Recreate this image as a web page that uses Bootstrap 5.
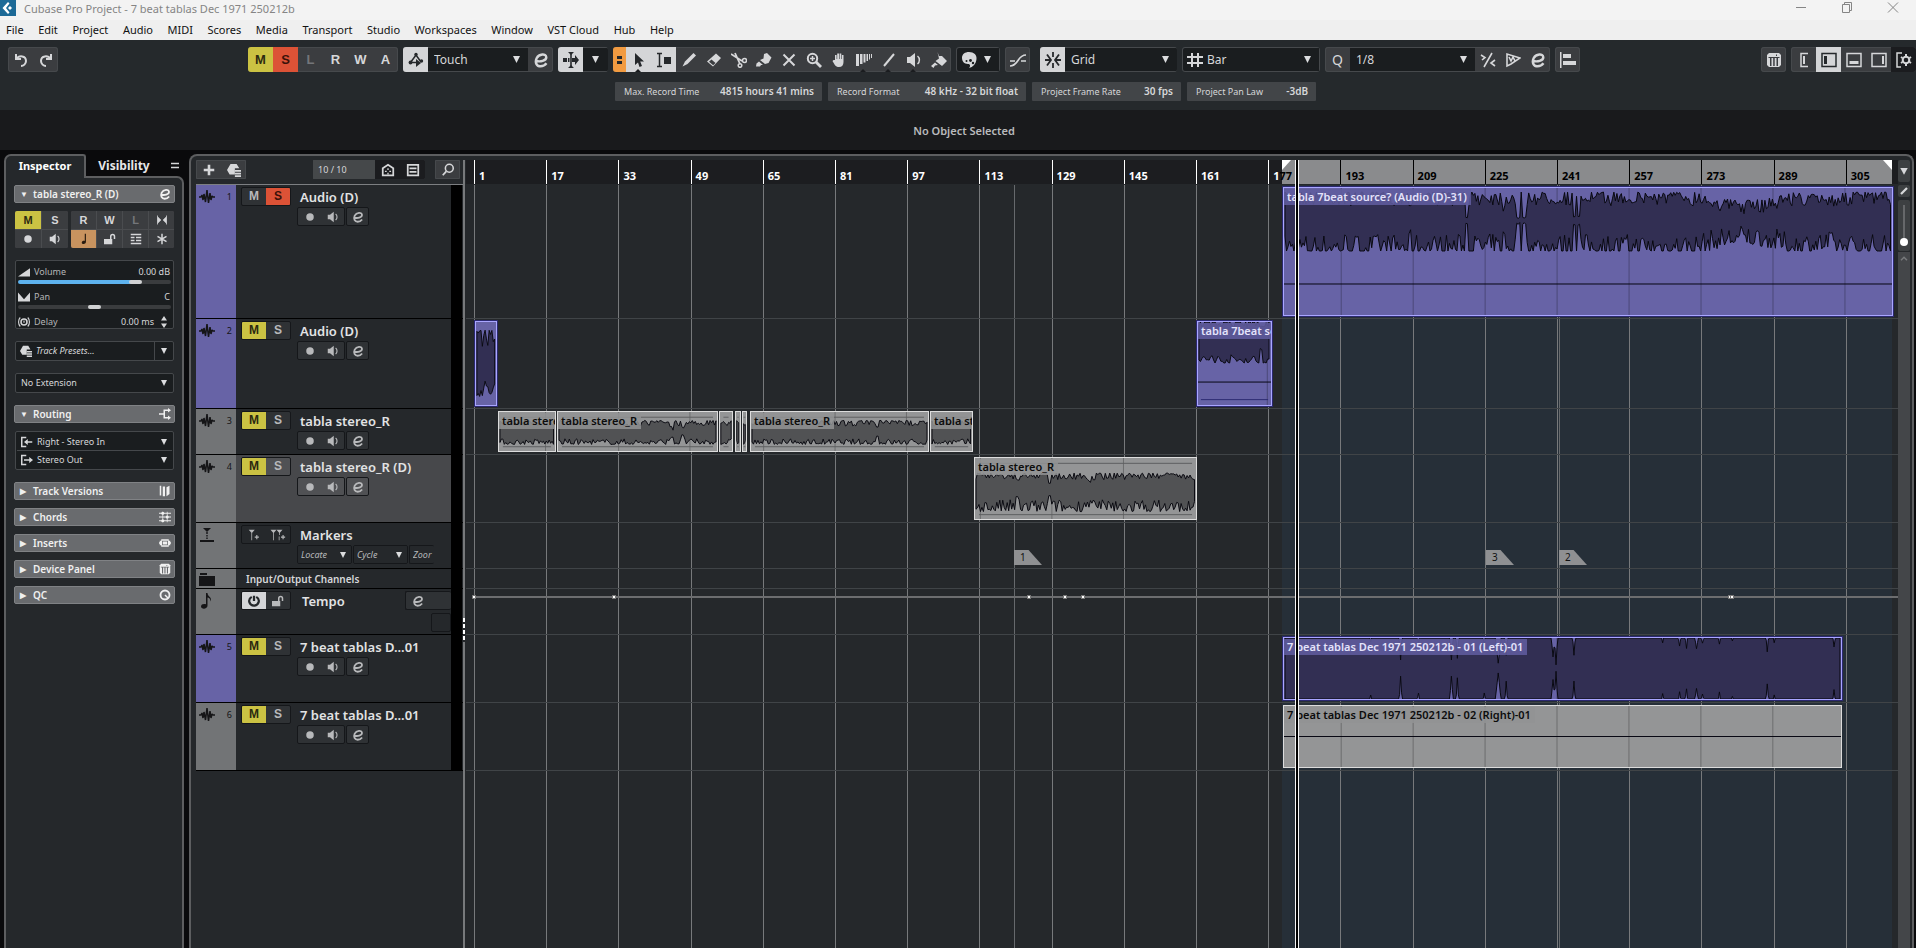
<!DOCTYPE html>
<html lang="en">
<head>
<meta charset="utf-8">
<meta name="viewport" content="width=device-width, initial-scale=1">
<title>Cubase Pro Project - 7 beat tablas Dec 1971 250212b</title>
<link href="https://cdn.jsdelivr.net/npm/bootstrap@5.3.0/dist/css/bootstrap.min.css" rel="stylesheet">
<script src="https://cdn.jsdelivr.net/npm/bootstrap@5.3.0/dist/js/bootstrap.bundle.min.js"></script>
<style>
:root{--panel:#25282b;--edge:#5d5e60;--cell:#3b3d40;--field:#1a1d1f;--rim:#46494c;--lit:#d4d5d7;--ink:#d6d7d9;
--purple:#6763a6;--grey:#727476;--down:url("data:image/svg+xml,%3Csvg xmlns='http://www.w3.org/2000/svg' viewBox='0 0 8 8'%3E%3Cpath d='M0 0h8L4 8z' fill='%23dcdddf'/%3E%3C/svg%3E")}
body{background:#0a0a0c;color:var(--ink);font-family:"Noto Sans","Open Sans",sans-serif;font-size:11px;line-height:16px}
.ic{width:16px;height:16px;fill:currentColor;stroke:none;flex:none;display:block}
.s{fill:none;stroke:currentColor;stroke-width:2}
.t{fill:none;stroke:currentColor;stroke-width:1}
.k{fill:var(--hole,#3b3d40)}
button{border:0;padding:0;background:none;color:inherit;font:inherit;display:flex;align-items:center;justify-content:center}
select{appearance:none;border:0;border-radius:0;background:var(--field) var(--down) no-repeat right 8px center/7px 7px;color:inherit;font:inherit;min-width:0}
.app-root{height:100vh}
.titlebar{height:20px;background:#f3f3f3;color:#858585}
.titlebar h1{font-size:11px;line-height:18px;font-weight:400;margin:0}
.win-btns button{width:46px;height:16px}
.menubar{height:20px;background:#efefef;padding-left:6px}
.menu-items{width:668px}
.menubar a{color:#111;text-decoration:none}
.toolbar{background:#25292c;height:70px;padding-top:7px}
.tool-row{height:25px;gap:5px}
.grp{display:flex;background:var(--cell);border-radius:3px;overflow:hidden;box-shadow:inset 0 0 0 1px var(--rim)}
.grp button{width:25px;height:25px}
.grp .letter{font:700 13px/25px "Liberation Sans",Arial,sans-serif}
.grp select{height:23px;margin:1px 0;font-size:12px;padding-left:6px}
.is-lit{background:var(--lit)!important;color:#25282b;--hole:#d4d5d7}
.is-mute{background:#cbc243!important;color:#2c2a10}
.is-solo{background:#dc5236!important;color:#3a120a}
.is-off{color:#74767a}
.has-more{position:relative}
.has-more:after{content:"";position:absolute;left:9px;bottom:0;border:solid transparent;border-width:0 3px 3px;border-bottom-color:#1a1c1f}
.w-touch{width:100px}.w-grid{width:112px}.w-bar{width:112px}.w-quant{width:125px}
.w-mini{width:25px;background-position:center!important}
.w-pal{width:18px;background-position:left 3px center!important}
.pal,.fld{background:var(--field);--hole:#1a1d1f}
.pal select,.fld select{margin-right:1px}
.nudge{margin-right:5px}
.qbtn{font-size:14px!important}
.right-tools{margin-left:176px;gap:5px}
.tool-mark{width:13px;background:#f29b41 linear-gradient(#25282b 0 3px,transparent 3px 5px,#25282b 5px 8px) no-repeat center/5px 8px}
.info{height:19px;margin-top:10px;padding-left:615px;gap:6px}
.info>div{background:#424548;padding:0 8px 0 9px;border-radius:1px;height:19px;font-size:9px;line-height:19px;display:flex;justify-content:space-between;gap:12px}
.info b{font-size:10px;font-weight:600}
.i1{width:207px}.i2{width:198px}.i3{width:149px}.i4{width:129px}
.obj-line{height:40px;background:#191a1c;font-weight:600;color:#b9babc;padding:2px 0 0 12px}
.inspector{width:180px;flex:none}
.tab-row{height:22px;font-size:12px;font-weight:700;line-height:20px}
.tab-row button{flex:none}
.tab-row .tab-on{width:82px;height:24px;border:2px solid var(--edge);border-bottom:0;border-radius:7px 3px 0 0;background:var(--panel);color:#fff;position:relative;z-index:1;font-size:11px;padding-bottom:2px}
.tab-row .tab-off{width:76px;height:24px;color:#e6e6e8}
.insp-body{border:2px solid var(--edge);border-bottom:0;border-radius:0 7px 0 0;background:var(--panel);padding:7px 7px 0 9px}
.sec{height:18px;background:#696b6e;border:1px solid #808285;border-radius:2px;color:#f0f0f0;font-size:10px;font-weight:600;width:161px;margin-left:-1px;--hole:#696b6e}
.sec button{height:16px;flex:1;justify-content:flex-start;gap:7px;padding-left:5px}
.tri{font-size:8px;width:6px}
.sec .ic{width:12px;height:12px;margin-right:3px}
.pad-grid{gap:1px;background:#4a4c4f;border-radius:2px;overflow:hidden;display:grid}
.pad-grid button{height:18px;background:var(--cell);font:700 11px/18px "Liberation Sans",Arial,sans-serif}
.pad-grid .ic{width:12px;height:12px}
.pads-a{grid-template-columns:1fr 1fr;width:53px}.pads-b{grid-template-columns:repeat(4,1fr);width:103px}
.timeb{background:#c8935f!important;color:#2a1c10}
.fieldbox{width:159px;border:1px solid #45484b;border-radius:2px;background:var(--field);font-size:9px;padding:1px}
.fieldbox .ic{width:12px;height:12px;margin-right:4px}
.fieldbox select{height:17px;flex:1;background-position:right 5px center;background-size:6px 6px}
.one-line select{height:16px}
.presets{background:linear-gradient(90deg,transparent 138px,#45484b 138px 139px,transparent 139px) var(--field)}
.presets select{background-color:transparent}
.meter-box{height:69px;padding:3px 2px 0 2px}
.meter-box .line{height:16px;padding-right:1px}
.line label,.line span{color:#b4b5b7}
input[type=range]{appearance:none;width:153px;height:4px;margin:0;display:block;border-radius:2px;background:#3a3c3e}
.line-rng{height:9px}
input[type=range]::-webkit-slider-thumb{appearance:none;width:13px;height:4px;border-radius:2px;background:#d0d1d3}
.vol-rng{background:linear-gradient(90deg,#5db2ee 75%,#3a3c3e 75%)!important}
.rt{border-bottom:1px solid #45484b}
.gap-row{margin-top:8px}.mt-12{margin-top:12px}
.project{border:2px solid var(--edge);border-bottom:0;border-radius:8px 8px 0 0;background:var(--panel);margin:0 2px 0 5px;min-width:0;overflow:hidden}
.tracklist{width:272px;flex:none;padding-left:5px}
.list-head{height:29px;padding-top:4px;border-bottom:1px solid #7d7f82}
.list-head .grp{height:19px;border-radius:1px}
.list-head .grp button{height:19px;width:25px}
.list-head .count{width:62px;padding-left:5px;font-size:9px;line-height:19px;background:#45484a}
.list-head .ic{width:14px;height:14px}
.head-mid{margin-left:67px}.head-end{margin-left:10px}
.dark-cell{background:#1b1c1f;--hole:#1b1c1f}
.trk,.lane{position:relative}
.t-xl{height:134px}.t-lg{height:90px}.t-md{height:68px}.t-sm{height:46px}.t-xs{height:20px}
.trk{display:flex;border-bottom:1px solid #000}
.strip{width:40px;background:var(--grey);color:#151517;padding:4px 4px 0 3px;font-size:9px}
.strip.pur{background:var(--purple)}
.body-cell{width:215px;overflow:hidden;padding:2px 0 0 5px;background:var(--panel)}
.sel .body-cell{background:#47484b}
.vu{width:11px;background:#000;margin-bottom:-1px;z-index:1}
.trk h2{font-size:13px;font-weight:600;line-height:20px;height:19px;margin:0 0 0 9px;color:#e2e3e4;white-space:nowrap}
.mini{display:flex;border:1px solid #15171a;border-radius:2px;background:#2f3235;overflow:hidden;color:#b8b9bb;--hole:#2f3235}
.sel .mini{background:#505154}
.mini button{width:24px;height:17px;font:700 12px/17px "Liberation Sans",Arial,sans-serif}
.mini .ic{width:12px;height:12px}
.mini .ic.wide{width:16px}
.row-2{margin:1px 0 0 56px;gap:1px}
.row-2 .mini button{width:23px}
.row-2 .mini:last-child button{width:21px}
.mini.plain,.mini.plain select{background-color:#25282b}
.mini select{width:53px;height:17px;font-size:9px;padding-left:3px;font-style:italic;background-position:right 5px center;background-size:6px 6px}
.mini.cut-off{width:25px;border-right:0}
.mini.cut-off select{background-image:none;flex:none}
.io-name{font-size:10px;font-weight:600;line-height:18px;padding-left:5px}
.folder .body-cell{padding-top:1px}.folder .strip{padding-top:2px}
.tempo h2{margin-left:11px}
.tempo-e{width:46px;border-right:0}
.tempo-box{width:20px;height:19px;margin:3px 0 0 auto}
.splitter{width:2px;background:#77797b;margin:4px 1px 0 0;flex:none;position:relative}
.splitter i{position:absolute;left:0;top:458px;width:2px;height:24px;background:repeating-linear-gradient(#fff 0 4px,#25282b 4px 6px)}
.timeline{position:relative;min-width:0;margin-top:4px;overflow:hidden}
.ruler{height:24px;margin-bottom:1px;background:#1c1d20;position:relative;font-weight:700;color:#fff;overflow:hidden}
.tick{position:absolute;top:0;height:24px;border-left:1px solid #fff;padding:8px 0 0 4px;line-height:16px}
.tick.in{border-color:#000;color:#000}
.range-bar,.range-bg{position:absolute;top:0;bottom:0;left:56.98%;right:.42%}
.range-bar{background:#8a8b8d}.range-bg{background:#262f38}
.range-bar:before,.range-bar:after{content:"";position:absolute;top:0;border:solid transparent}
.range-bar:before{left:0;border-width:10px 9px 0 0;border-top-color:#fff}
.range-bar:after{right:0;border-width:0 9px 10px 0;border-right-color:#fff}
.lanes{position:relative}
.vline{position:absolute;top:0;bottom:0;width:1px;background:#77797b}
.vline.dim{background:#66696c}
.lane{border-bottom:1px solid #404447}
.clip{position:absolute;top:2px;bottom:2px;border:1px solid #dcdcdc;background:#949596;color:#0c0c0c;overflow:hidden;font-size:11px;font-weight:600;line-height:16px}
.clip.pur{background:var(--purple);border-color:#a9a6ff;color:#e4e3fb;box-shadow:0 0 0 1px #2b2870}
.clip svg{position:absolute;inset:0;width:100%;height:100%}
.clip span{position:relative;display:inline-block;margin-top:1px;padding:0 4px 0 3px;white-space:nowrap;background:rgba(146,147,148,.85)}
.clip.pur span{background:rgba(96,92,158,.88)}
.flag{position:absolute;top:27px;width:28px;height:15px;background:#8f9092;color:#111;clip-path:polygon(0 0,52% 0,100% 100%,0 100%);font-size:10px;line-height:15px;padding-left:6px}
.tempo-line{position:absolute;left:8px;right:0;top:7px;height:2px;background:#6c6d6f}
.node{position:absolute;top:6px;width:4px;height:4px;background:#fff;border:1px solid #777;margin-left:-2px}
.playhead{position:absolute;top:0;bottom:0;left:57.89%;width:4px;background:#000;border:solid #f4f4f4;border-width:0 1px}
.side{width:14px;flex:none;padding:4px 2px 0 0}
.side button,.zoom{width:12px;background:#3d4042;border-radius:2px}
.side .ic{width:12px;height:12px}
.s-top{height:22px;margin-bottom:3px}.s-pen{height:12px;margin-bottom:3px}
.zoom{height:51px;position:relative;margin-bottom:1px}
.zoom:before{content:"";position:absolute;left:5px;top:5px;width:2px;height:36px;background:#66686a}
.zoom:after{content:"";position:absolute;left:2px;top:38px;width:8px;height:8px;border-radius:50%;background:#fff}
.scroll{background:#444649;width:12px;color:#77797b}
</style>
</head>
<body>
<svg width="0" height="0" class="position-absolute" aria-hidden="true"><defs>
<symbol id="undo" viewBox="0 0 16 16"><path class="s" d="M3 2v5h5M3.500 7C6 3 13 3.500 13 9c0 3-2.500 5-5 5"/></symbol>
<symbol id="redo" viewBox="0 0 16 16"><path class="s" d="M13 2v5H8M12.500 7C10 3 3 3.500 3 9c0 3 2.500 5 5 5"/></symbol>
<symbol id="e" viewBox="0 0 16 16"><path class="s" style="stroke-width:2.400" d="M2.500 8.500C7 10.500 13.500 8.500 13.300 5.200 13 1.200 6 1.800 3.600 6.200 1.500 11 4 14.300 7.500 14.300c2.500 0 4.700-1.300 6-3"/></symbol>
<symbol id="auto" viewBox="0 0 16 16"><path class="s" style="stroke-width:1.500" d="M2.500 10.500 8 3l5 7M3 10.500h6"/><circle cx="8" cy="2.500" r="1.700"/><circle cx="2.500" cy="10.500" r="1.900"/><path d="M8 7v8l5-4z"/><circle cx="13.500" cy="9" r="1.700"/></symbol>
<symbol id="ascroll" viewBox="0 0 16 16"><path d="M0 6h4v4H0zM7.200 1h1.600v14H7.200zM9 6h3V3l4 5-4 5v-3H9zM5 6h1.500v4H5z"/><path d="M5 0h6L8 3zM5 16h6l-3-3z"/></symbol>
<symbol id="arrow" viewBox="0 0 16 16"><path d="M4 1v12l3-2.500L8.500 15l2.500-1-1.800-4.500H13z"/></symbol>
<symbol id="range" viewBox="0 0 16 16"><path class="s" style="stroke-width:1.500" d="M1 1.500h5M1 14.500h5M3.500 1.500v13"/><path d="M8 5h7v7H8z"/></symbol>
<symbol id="pencil" viewBox="0 0 16 16"><path d="M12.500 1 15 3.500 6.500 12 1.500 14.500 4 9.500z"/></symbol>
<symbol id="eraser" viewBox="0 0 16 16"><path d="M10 1.500 15 6l-8 8.500L1 9.500z"/><path class="k" d="m5.500 7.500 4 3.500-2.300 2.200L3 9.800z"/></symbol>
<symbol id="cut" viewBox="0 0 16 16"><path class="s" style="stroke-width:1.800" d="M0 2l11 7M4 1l5 11"/><circle class="s" style="stroke-width:1.500" cx="13.500" cy="8.500" r="2"/><circle class="s" style="stroke-width:1.500" cx="9" cy="13.500" r="1.800"/></symbol>
<symbol id="glue" viewBox="0 0 16 16"><path d="M11 1l4.500 4.500-3 5.500-3.500 1-5-4 3.500-1.500L8 2zM3 9.500l4 3.500H5l-1 1.500H0l.5-3z"/></symbol>
<symbol id="cross" viewBox="0 0 16 16"><path class="s" d="M2.500 2.500l11 11M13.500 2.500l-11 11"/></symbol>
<symbol id="zoomi" viewBox="0 0 16 16"><circle class="s" cx="6.500" cy="6.500" r="4.700"/><path class="s" style="stroke-width:2.800" d="m10 10 5 5"/><path class="t" style="stroke-width:1.500" d="M4 6.500h5M6.500 4v5"/></symbol>
<symbol id="hand" viewBox="0 0 16 16"><path d="M4 8V3h1.600v4h.6V1.500H8V7h.6V1.500h1.700V7h.6V3h1.600v7c0 3-1.500 5-4.500 5s-4-1.500-6.500-6l1-1z"/></symbol>
<symbol id="comp" viewBox="0 0 16 16"><path d="M0 2h3v12H0zM4 2h2.500v10H4zM7.500 2h2v8.500h-2zM10.500 2H12v7h-1.500zM13 2h1v5.500h-1zM15 2h1v4h-1z"/></symbol>
<symbol id="linei" viewBox="0 0 16 16"><path class="s" d="M3 14 13 2"/></symbol>
<symbol id="spk" viewBox="0 0 16 16"><path d="M1 5h3l5-4v14l-5-4H1z"/><path class="s" style="stroke-width:1.500" d="M11.500 4c2.500 2 2.500 6 0 8"/></symbol>
<symbol id="bucket" viewBox="0 0 16 16"><path d="M6.500 0l1.500 4h3l5 5-5 5-6.500-5L8 6.500zM4 10.500 7 13l-3 .5L2.500 16 0 14z"/></symbol>
<symbol id="palette" viewBox="0 0 16 16"><path d="M8 0c5 0 8 3 7.500 7-.5 5-3.500 8-7.500 9 2-2 1-4-1-4-4 0-6-3-6-6 0-4 3-6 7-6z"/><circle class="k" cx="9.500" cy="8.500" r="1.400"/><circle class="k" cx="5.500" cy="9" r="1"/><circle class="k" cx="12" cy="11" r="1.200"/></symbol>
<symbol id="curve" viewBox="0 0 16 16"><path class="s" style="stroke-width:1.700" d="M0 14c9 0 7-11 16-11"/><path class="s" style="stroke-width:1.500" d="M0 9h5M11 9h5"/></symbol>
<symbol id="snap" viewBox="0 0 16 16"><path class="s" style="stroke-width:1.800" d="M8 0v5M8 11v5M2 2.500 6 8l-4 5.500M14 2.500 10 8l4 5.500M0 8h5M11 8h5"/></symbol>
<symbol id="gridi" viewBox="0 0 16 16"><path class="s" d="M5 1v14M11 1v14M0 5h16M0 11h16"/></symbol>
<symbol id="iq" viewBox="0 0 16 16"><path class="s" style="stroke-width:1.600" d="M12 1 4 15M1 3l4 2.500L2 8M15 8l-4 3 4 3"/></symbol>
<symbol id="aq" viewBox="0 0 16 16"><path class="s" style="stroke-width:1.600" d="M2 14V2l13 4-9 6zM4 5l2 4 2-4 2 4"/></symbol>
<symbol id="align" viewBox="0 0 16 16"><path d="M0 0h1.500v16H0zM3 2h8v4H3zM3 9h13v4H3z"/></symbol>
<symbol id="keys" viewBox="0 0 16 16"><path d="M3 1h10l2 2v10l-2 2H3l-2-2V3z"/><path class="k" d="M2.500 5h11v1h-11zM4 6h1.500v8H4zM7.200 6h1.500v8H7.200zM10.500 6H12v8h-1.500zM10 2.500h1V4h-1z"/></symbol>
<symbol id="z1" viewBox="0 0 16 16"><path class="t" style="stroke-width:1.500" d="M12 1.500H5v13h7"/><path d="M7 4h2v8H7z"/></symbol>
<symbol id="z2" viewBox="0 0 16 16"><path class="t" style="stroke-width:1.500" d="M1 1.500h14v13H1z"/><path d="M3 4h3v8H3z"/></symbol>
<symbol id="z3" viewBox="0 0 16 16"><path class="t" style="stroke-width:1.500" d="M1 1.500h14v13H1z"/><path d="M3.500 9h9v3h-9z"/></symbol>
<symbol id="z4" viewBox="0 0 16 16"><path class="t" style="stroke-width:1.500" d="M1 1.500h14v13H1z"/><path d="M11 4h2v8h-2z"/></symbol>
<symbol id="gear" viewBox="0 0 16 16"><path class="t" style="stroke-width:1.500" d="M6 1H1v14h4"/><circle class="s" cx="10" cy="8" r="3.300"/><path class="s" d="M10 2v2M10 12v2M5 5l1.500 1M15 5l-1.500 1M5 11l1.500-1M15 11l-1.500-1"/></symbol>
<symbol id="bow" viewBox="0 0 16 16"><path d="M2 3l5 5-5 5zM14 3 9 8l5 5z"/><path class="t" d="M2 2v12M14 2v12"/></symbol>
<symbol id="dot" viewBox="0 0 16 16"><circle cx="8" cy="8" r="5"/></symbol>
<symbol id="note" viewBox="0 0 16 16"><path d="M9 1h1.600v11c0 3-5.600 3.500-5.600.5C5 10.500 7.500 10 9 10.500z"/></symbol>
<symbol id="eighth" viewBox="0 0 16 16"><path d="M7 0h1.500c0 4 5 3.500 3 8.500 0-3-1.500-4-3-4v8c0 4-6.500 4-6.500 1C2 11 5 10.500 7 11.300z"/></symbol>
<symbol id="lock" viewBox="0 0 16 16"><path d="M0 8h11v7H0z"/><path class="s" d="M9 8V4.500c0-3.500 5-3.500 5 0V8"/></symbol>
<symbol id="lanesi" viewBox="0 0 16 16"><path class="s" style="stroke-width:1.700" d="M1 2h14M1 14h14M1 6h5M8 6h7M1 10h5M8 10h7"/></symbol>
<symbol id="star" viewBox="0 0 16 16"><path class="s" d="M8 1v14M2 4.500l12 7M14 4.500l-12 7"/></symbol>
<symbol id="ramp" viewBox="0 0 16 16"><path d="M0 14 16 3v11z"/></symbol>
<symbol id="pani" viewBox="0 0 16 16"><path d="M0 2l8 9 8-9v12H0z"/></symbol>
<symbol id="delay" viewBox="0 0 16 16"><circle class="s" cx="8" cy="8" r="4"/><path class="s" style="stroke-width:1.500" d="M3 2c-3 3-3 9 0 12M13 2c3 3 3 9 0 12M8 6v3"/></symbol>
<symbol id="preset" viewBox="0 0 16 16"><path d="M4 1h7l3 5H9v7H3L0 8z"/><path d="M9 8h7v2H9zM9 11h7v2H9zM9 14h7v2H9z"/></symbol>
<symbol id="inp" viewBox="0 0 16 16"><path class="s" d="M7 2H1v12h6"/><path d="M4 8l5-4v3h6v2H9v3z"/></symbol>
<symbol id="outp" viewBox="0 0 16 16"><path class="s" d="M7 2H1v12h6"/><path d="M16 8l-5-4v3H4v2h7v3z"/></symbol>
<symbol id="route" viewBox="0 0 16 16"><path class="s" d="M0 8h6M13 3H7v10h6"/><path d="M12 0l4 3-4 3zM12 10l4 3-4 3z"/></symbol>
<symbol id="vers" viewBox="0 0 16 16"><path d="M1 1h2v13H1zM5 2h3v13H5zM10 3l4-2v11l-4 3z"/></symbol>
<symbol id="chord" viewBox="0 0 16 16"><path class="s" style="stroke-width:1.500" d="M0 3h16M0 8h16M0 13h16"/><path class="t" d="M5 1v14M11 1v14"/><circle cx="5" cy="3" r="2"/><circle cx="11" cy="8" r="2"/><circle cx="5" cy="13" r="2"/></symbol>
<symbol id="ins" viewBox="0 0 16 16"><path d="M3 3h10v2h2v2h1v2h-1v2h-2v2H3v-2H1V9H0V7h1V5h2z"/><path class="k" d="M4 5h8v1H4zM4 10h8v1H4zM4 5h1v6H4zM11 5h1v6h-1z"/></symbol>
<symbol id="qci" viewBox="0 0 16 16"><circle class="s" style="stroke-width:2.500" cx="8" cy="8" r="6"/><path class="s" d="m8 8 4 4"/></symbol>
<symbol id="plus" viewBox="0 0 16 16"><path class="s" style="stroke-width:3" d="M8 2v12M2 8h12"/></symbol>
<symbol id="visi" viewBox="0 0 16 16"><path class="s" d="M2 6l6-4 6 4v8H2z"/><path class="s" style="stroke-width:1.500" d="M4.500 9.500h2M9.500 9.500h2M8 6v2M8 11v2"/></symbol>
<symbol id="listi" viewBox="0 0 16 16"><path class="s" style="stroke-width:2" d="M2 2h12v12H2zM4 6h8M4 10h8"/></symbol>
<symbol id="find" viewBox="0 0 16 16"><circle class="s" style="stroke-width:1.800" cx="9.500" cy="6" r="4.500"/><path class="s" d="M6 9.500 2 14"/></symbol>
<symbol id="wav" viewBox="0 0 16 16"><path class="s" style="stroke-width:1.500" stroke-linejoin="bevel" d="M0 8h2l1-2 1 5 1-6 1.500 8L8 1l1.500 13L11 4l1 7 1-4 1 1h2"/></symbol>
<symbol id="marks" viewBox="0 0 16 16"><path d="M4 1h8L8 5zM1 13h14v2H1zM7.300 5h1.400v2H7.300zM7.300 8h1.400v1.500H7.300zM7.300 10.500h1.400V12H7.300z"/></symbol>
<symbol id="folder" viewBox="0 0 16 16"><path d="M1 2h7v2H1zM0 5h16v10H0z"/></symbol>
<symbol id="addm" viewBox="0 0 16 16"><path d="M1 1h8L5.500 5v10h-1V5zM9 10h2V8h1.500v2h2v1.500h-2v2H11v-2H9z"/></symbol>
<symbol id="addc" viewBox="0 0 20 16"><path d="M0 1h8L4.500 5v10h-1V5zM8 1h8l-3.500 4v3h-1V5zM11 10h1v5h-1zM14 10h2V8h1.500v2h2v1.500h-2v2H16v-2h-2z"/></symbol>
<symbol id="power" viewBox="0 0 16 16"><path class="s" style="stroke-width:3" d="M5 2.500C-1 6 1.500 14 8 14s9-8 3-11.500M8 1v7"/></symbol>
<symbol id="cube" viewBox="0 0 16 16"><path d="M0 0h16v16H0z" fill="#1d6a97"/><path d="M8 2 2.500 8 8 14l1.500-1.500L6 8l3.500-4.500zM10 6l2 2-2 2-2-2z" fill="#fff"/></symbol>
</defs></svg>

<div class="app-root d-flex flex-column overflow-hidden">
<header class="titlebar d-flex align-items-start">
  <svg class="ic me-2"><use href="#cube"/></svg><h1 class="flex-grow-1">Cubase Pro Project - 7 beat tablas Dec 1971 250212b</h1>
  <div class="win-btns d-flex">
    <button aria-label="Minimize"><svg class="ic" viewBox="0 0 16 16"><path class="t" d="M3 7.500h10"/></svg></button>
    <button aria-label="Restore"><svg class="ic" viewBox="0 0 16 16"><path class="t" d="M3.500 4.500h7v8h-7zM5.500 4V2.500h7v8H11"/></svg></button>
    <button aria-label="Close"><svg class="ic" viewBox="0 0 16 16"><path class="t" d="m3 2.500 10 10M13 2.500l-10 10"/></svg></button>
  </div>
</header>
<nav class="menubar d-flex align-items-center" aria-label="Main menu"><div class="menu-items d-flex justify-content-between">
<a href="#">File</a><a href="#">Edit</a><a href="#">Project</a><a href="#">Audio</a><a href="#">MIDI</a><a href="#">Scores</a><a href="#">Media</a><a href="#">Transport</a><a href="#">Studio</a><a href="#">Workspaces</a><a href="#">Window</a><a href="#">VST Cloud</a><a href="#">Hub</a><a href="#">Help</a>
</div></nav>

<div class="toolbar">
  <div class="tool-row d-flex">
    <div class="d-flex flex-grow-1 ps-2"><div class="grp"><button aria-label="Undo"><svg class="ic"><use href="#undo"/></svg></button><button aria-label="Redo"><svg class="ic"><use href="#redo"/></svg></button></div></div>
    <div class="grp"><button class="letter is-mute">M</button><button class="letter is-solo">S</button><button class="letter is-off">L</button><button class="letter">R</button><button class="letter">W</button><button class="letter">A</button></div>
    <div class="grp"><button class="is-lit" aria-label="Automation follows events"><svg class="ic"><use href="#auto"/></svg></button><select class="w-touch" aria-label="Automation mode"><option>Touch</option></select><button aria-label="Automation panel"><svg class="ic"><use href="#e"/></svg></button></div>
    <div class="grp"><button class="is-lit" aria-label="Auto-scroll"><svg class="ic"><use href="#ascroll"/></svg></button><select aria-label="Auto-scroll settings" class="w-mini"><option></option></select></div>
    <div class="grp" id="tools"></div>
    <div class="grp pal"><button aria-label="Color tool"><svg class="ic"><use href="#palette"/></svg></button><select class="w-pal" aria-label="Colors"><option></option></select></div>
    <div class="grp nudge"><button aria-label="Nudge"><svg class="ic"><use href="#curve"/></svg></button></div>
    <div class="grp"><button class="is-lit" aria-label="Snap"><svg class="ic"><use href="#snap"/></svg></button><select class="w-grid" aria-label="Snap type"><option>Grid</option></select></div>
    <div class="grp fld"><button aria-label="Grid type"><svg class="ic"><use href="#gridi"/></svg></button><select class="w-bar ps-0" aria-label="Grid type value"><option>Bar</option></select></div>
    <div class="grp"><button class="qbtn" aria-label="Apply quantize">Q</button><select class="w-quant" aria-label="Quantize preset"><option>1/8</option></select><button aria-label="Iterative quantize"><svg class="ic"><use href="#iq"/></svg></button><button aria-label="Audio quantize"><svg class="ic"><use href="#aq"/></svg></button><button aria-label="Quantize panel"><svg class="ic"><use href="#e"/></svg></button></div>
    <div class="grp"><button aria-label="Align"><svg class="ic"><use href="#align"/></svg></button></div>
    <div class="d-flex right-tools">
      <div class="grp"><button aria-label="On-screen keyboard"><svg class="ic"><use href="#keys"/></svg></button></div>
      <div class="grp"><button aria-label="Inspector zone"><svg class="ic"><use href="#z1"/></svg></button><button class="is-lit" aria-label="Left zone"><svg class="ic"><use href="#z2"/></svg></button><button aria-label="Lower zone"><svg class="ic"><use href="#z3"/></svg></button><button aria-label="Right zone"><svg class="ic"><use href="#z4"/></svg></button><button class="dark-cell" aria-label="Layout setup"><svg class="ic"><use href="#gear"/></svg></button></div>
    </div>
  </div>
  <div class="info d-flex">
    <div class="i1">Max. Record Time <b>4815 hours 41 mins</b></div><div class="i2">Record Format <b>48 kHz - 32 bit float</b></div><div class="i3">Project Frame Rate <b>30 fps</b></div><div class="i4">Project Pan Law <b>-3dB</b></div>
  </div>
</div>
<div class="obj-line d-flex align-items-center justify-content-center">No Object Selected</div>

<main class="d-flex flex-grow-1 pt-1 ps-1 overflow-hidden">
<aside class="inspector d-flex flex-column">
  <div class="tab-row d-flex"><button class="tab-on">Inspector</button><button class="tab-off">Visibility</button><button class="ms-auto" aria-label="Setup inspector"><svg class="ic" viewBox="0 0 16 16"><path class="s" style="stroke-width:1.500" d="M3 6.500h8M3 10.500h8"/></svg></button></div>
  <div class="insp-body flex-grow-1">
    <div class="sec d-flex align-items-center"><button><i class="tri fst-normal">▼</i>tabla stereo_R (D)</button><svg class="ic"><use href="#e"/></svg></div>
    <div class="d-flex gap-row" style="gap:3px">
      <div class="pad-grid pads-a"><button class="is-mute">M</button><button>S</button><button aria-label="Record enable"><svg class="ic"><use href="#dot"/></svg></button><button aria-label="Monitor"><svg class="ic"><use href="#spk"/></svg></button></div>
      <div class="pad-grid pads-b"><button>R</button><button>W</button><button class="is-off">L</button><button aria-label="Channel"><svg class="ic"><use href="#bow"/></svg></button><button class="timeb" aria-label="Musical time base"><svg class="ic"><use href="#note"/></svg></button><button aria-label="Lock"><svg class="ic"><use href="#lock"/></svg></button><button aria-label="Lanes"><svg class="ic"><use href="#lanesi"/></svg></button><button aria-label="Freeze"><svg class="ic"><use href="#star"/></svg></button></div>
    </div>
    <div class="fieldbox meter-box mt-12">
      <div class="line d-flex align-items-center"><svg class="ic"><use href="#ramp"/></svg><label for="vol" class="flex-grow-1">Volume</label>0.00 dB</div>
      <div class="line-rng"><input id="vol" class="vol-rng" type="range" min="0" max="100" value="79"></div>
      <div class="line d-flex align-items-center"><svg class="ic"><use href="#pani"/></svg><label for="pan" class="flex-grow-1">Pan</label>C</div>
      <div class="line-rng"><input id="pan" type="range" min="0" max="100" value="50"></div>
      <div class="line d-flex align-items-center"><svg class="ic"><use href="#delay"/></svg><span class="flex-grow-1">Delay</span>0.00 ms<svg class="ic ms-1 me-0" viewBox="0 0 16 16"><path d="M8 0l4 6H4zM8 16l4-6H4z"/></svg></div>
    </div>
    <div class="fieldbox one-line mt-12 d-flex align-items-center ps-1 presets"><svg class="ic"><use href="#preset"/></svg><select class="fst-italic" aria-label="Track presets"><option>Track Presets...</option></select></div>
    <div class="fieldbox one-line mt-12 d-flex"><select class="ps-1" aria-label="Extension"><option>No Extension</option></select></div>
    <div class="sec mt-12 d-flex align-items-center"><button><i class="tri fst-normal">▼</i>Routing</button><svg class="ic"><use href="#route"/></svg></div>
    <div class="fieldbox gap-row">
      <div class="d-flex align-items-center ps-1 rt"><svg class="ic"><use href="#inp"/></svg><select aria-label="Input routing"><option>Right - Stereo In</option></select></div>
      <div class="d-flex align-items-center ps-1"><svg class="ic"><use href="#outp"/></svg><select aria-label="Output routing"><option>Stereo Out</option></select></div>
    </div>
    <div class="sec mt-12 d-flex align-items-center"><button><i class="tri fst-normal">▶</i>Track Versions</button><svg class="ic"><use href="#vers"/></svg></div>
    <div class="sec gap-row d-flex align-items-center"><button><i class="tri fst-normal">▶</i>Chords</button><svg class="ic"><use href="#chord"/></svg></div>
    <div class="sec gap-row d-flex align-items-center"><button><i class="tri fst-normal">▶</i>Inserts</button><svg class="ic"><use href="#ins"/></svg></div>
    <div class="sec gap-row d-flex align-items-center"><button><i class="tri fst-normal">▶</i>Device Panel</button><svg class="ic"><use href="#keys"/></svg></div>
    <div class="sec gap-row d-flex align-items-center"><button><i class="tri fst-normal">▶</i>QC</button><svg class="ic"><use href="#qci"/></svg></div>
  </div>
</aside>

<section class="project d-flex flex-grow-1" aria-label="Project">
  <div class="tracklist" id="tracklist">
    <div class="list-head d-flex">
      <div class="grp"><button aria-label="Add track"><svg class="ic"><use href="#plus"/></svg></button><button aria-label="Track preset"><svg class="ic"><use href="#preset"/></svg></button></div>
      <div class="grp head-mid"><div class="count">10 / 10</div><button class="dark-cell" aria-label="Visibility agents"><svg class="ic"><use href="#visi"/></svg></button><button class="dark-cell" aria-label="Global controls"><svg class="ic"><use href="#listi"/></svg></button></div>
      <div class="grp head-end"><button aria-label="Find track"><svg class="ic"><use href="#find"/></svg></button></div>
    </div>
  </div>
  <div class="splitter"><i></i></div>
  <div class="timeline flex-grow-1 d-flex flex-column">
    <div class="ruler" id="ruler"><div class="range-bar"></div></div>
    <div class="lanes flex-grow-1" id="lanes"><div class="range-bg"></div></div>
    <div class="playhead"></div>
  </div>
  <div class="side d-flex flex-column">
    <button class="s-top" aria-label="Ruler menu"><svg class="ic" viewBox="0 0 16 16"><path d="M3 4h10L8 13z"/></svg></button>
    <button class="s-pen" aria-label="Edit"><svg class="ic" viewBox="0 0 16 16"><path class="s" style="stroke-width:3" d="m4 12 8-8"/></svg></button>
    <div class="zoom"></div>
    <div class="scroll flex-grow-1"><svg class="ic" viewBox="0 0 16 16"><path class="s" d="m4 11 4-4 4 4"/></svg></div>
  </div>
</section>
</main>
</div>

<script>
const ic = (n, c = '') => `<svg class="ic ${c}"><use href="#${n}"/></svg>`;
const more = ['arrow', 'comp', 'linei', 'spk'];
document.getElementById('tools').innerHTML =
  '<div class="tool-mark"></div>' +
  ['arrow','range','pencil','eraser','cut','glue','cross','zoomi','hand','comp','linei','spk','bucket']
  .map((n,i)=>`<button class="${i<2?'is-lit':''} ${more.includes(n)?'has-more':''}" aria-label="${n}">${ic(n)}</button>`).join('');

const tracks = [
 {n:1,t:'xl',c:'pur',name:'Audio (D)',solo:1},{n:2,t:'lg',c:'pur',name:'Audio (D)',mute:1},
 {n:3,t:'sm',name:'tabla stereo_R',mute:1},{n:4,t:'md',name:'tabla stereo_R (D)',mute:1,sel:1},
 {kind:'marker',t:'sm',icon:'marks'},{kind:'folder',t:'xs',icon:'folder'},{kind:'tempo',t:'sm',icon:'eighth'},
 {n:5,t:'md',c:'pur',name:'7 beat tablas D...01',mute:1},{n:6,t:'md',name:'7 beat tablas D...01',mute:1}];
const bodies = {
 marker:()=>`<div class="d-flex"><div class="mini plain"><button aria-label="Add marker">${ic('addm')}</button><button aria-label="Add cycle marker">${ic('addc','wide')}</button></div><h2>Markers</h2></div>
  <div class="row-2 d-flex"><div class="mini plain"><select aria-label="Locate"><option>Locate</option></select></div><div class="mini plain"><select aria-label="Cycle"><option>Cycle</option></select></div><div class="mini plain cut-off"><select aria-label="Zoom"><option>Zoor</option></select></div></div>`,
 folder:()=>`<div class="io-name">Input/Output Channels</div>`,
 tempo:()=>`<div class="d-flex"><div class="mini"><button class="is-lit" aria-label="Activate tempo track">${ic('power')}</button><button aria-label="Lock">${ic('lock')}</button></div><h2>Tempo</h2><div class="mini ms-auto tempo-e"><button aria-label="Edit tempo">${ic('e')}</button></div></div><div class="mini plain tempo-box"></div>`,
 audio:t=>`<div class="d-flex"><div class="mini"><button class="${t.mute?'is-mute':''}">M</button><button class="${t.solo?'is-solo':''}">S</button></div><h2>${t.name}</h2></div>
  <div class="row-2 d-flex"><div class="mini"><button aria-label="Record enable">${ic('dot')}</button><button aria-label="Monitor">${ic('spk')}</button></div><div class="mini"><button aria-label="Edit channel">${ic('e')}</button></div></div>`};
document.getElementById('tracklist').insertAdjacentHTML('beforeend', tracks.map(t=>
 `<div class="trk t-${t.t} ${t.sel?'sel':''} ${t.kind||''}"><div class="strip d-flex justify-content-between align-items-start ${t.c||''}">${ic(t.icon||'wav')}<span>${t.n||''}</span></div><div class="body-cell">${bodies[t.kind||'audio'](t)}</div><div class="vu"></div></div>`).join(''));

/* Timeline: x values are measured on a 1432-unit wide view and placed as percentages. */
const W = 1432, pc = x => (x / W * 100).toFixed(3) + '%';
const X0 = 8, BAR = 72.2, RANGE = 816;
const ruler = document.getElementById('ruler'), lanes = document.getElementById('lanes');
let rh = '', lh = '';
for (let i = 0; i < 20; i++) {
  const x = X0 + i * BAR, n = 1 + 16 * i;
  rh += `<div class="tick ${x > RANGE ? 'in' : ''}" style="left:${pc(x)}">${n === 177 ? '1<span class="text-black">77</span>' : n}</div>`;
  lh += `<div class="vline" style="left:${pc(x)}"></div>`;
}
[548, 1093].forEach(x => lh += `<div class="vline dim" style="left:${pc(x)}"></div>`);
ruler.insertAdjacentHTML('beforeend', rh);

let seed = 7;
const rnd = () => (seed = (seed * 16807) % 2147483647) / 2147483647;
function wave(c, h) {
  const w = c.w, v = c.v, top = [], bot = [];
  for (let x = 1; x <= w - 1; x += v.step || 1.5) {
    let k = 1;
    (v.dips || []).forEach(([dx, dw, d]) => { const q = Math.abs(x - dx); if (q < dw) k = Math.min(k, 1 - d * (v.soft ? 1 - q / dw : 1)); });
    (v.slope || []).forEach(([a, b, f]) => { if (x > a && x < b) k *= 1 - f * Math.sin((x - a) / (b - a) * Math.PI); });
    const mid = v.mid;
    const j = () => (Math.pow(rnd(), 1.6) - .35) * v.j * (k < .5 ? .1 : 1);
    top.push(`${x} ${Math.max(v.min ?? 2, mid - (mid - v.top) * k + j()).toFixed(1)}`);
    bot.push(`${x} ${Math.min(v.max ?? h - 2, mid + (v.bot - mid) * k - j() * (v.jb || 1)).toFixed(1)}`);
  }
  const fill = c.p ? '#322f53' : '#515254';
  return `<path d="M${top.join('L')}L${bot.reverse().join('L')}Z" fill="${fill}" stroke="#08080f" stroke-width="1"/>`;
}
function clip(c, h) {
  let g = '';
  for (let i = 0; i < 20; i++) { const x = X0 + i * BAR - c.x; if (x > 2 && x < c.w - 2) g += `<path d="M${x.toFixed(1)} 0V${h}" stroke="#000" stroke-opacity=".28"/>`; }
  if (c.rule) g += `<path d="M4 5.500H${c.w - 4}M4 ${h - 4.5}H${c.w - 4}" stroke="#5c5d5f" stroke-width="1" fill="none"/>`;
  if (c.v) g += wave(c, h);
  if (c.line) g += `<path d="M0 ${c.line}.5H${c.w}" stroke="#050510"/>`;
  if (c.low) g += `<path d="M3 ${c.low}.5H${c.w - 3}" stroke="#2b2870"/>`;
  return `<div class="clip ${c.p ? 'pur' : ''}" style="left:${pc(c.x)};width:${pc(c.w)}"><svg viewBox="0 0 ${c.w} ${h}" preserveAspectRatio="none" aria-hidden="true">${g}</svg>${c.t ? `<span>${c.t}</span>` : ''}</div>`;
}
const small = {mid:20, top:11, bot:32, j:6, min:5, max:36};
const R = 'tabla stereo_R';
const content = [
 [{x:817,w:610,p:1,t:'tabla 7beat source? (Audio (D)-31)',line:97,v:{mid:33,top:9,bot:60,j:14,jb:1.5,min:2,max:64,
   dips:[[62,2,.1],[127,1.2,.3],[183,2,.88],[221,1.2,.3],[235,3,.88],[241,1.6,.88],[291,1.2,.85],[296,1.2,.85]],slope:[[415,510,.35],[510,570,.1]]}}],
 [{x:9,w:22,p:1,v:{mid:42,top:14,bot:70,j:18,min:2,max:83}},{x:731,w:75,p:1,t:'tabla 7beat source?',line:61,low:79,v:{mid:16,top:0,bot:39,j:9,min:0,max:42,dips:[[14,2,.2],[65,2,.45]]}}],
 [{x:32,w:58,t:R},{x:91,w:161,t:R,v:{...small,dips:[[115,2,.5],[127,2,.4]]}},{x:253,w:14},{x:269,w:6},{x:276,w:5},{x:284,w:179,t:R,v:{...small,dips:[[128,2,.55]]}},{x:464,w:43,t:R}].map(c=>({v:small,rule:1,...c})),
 [{x:508,w:223,t:R,rule:1,v:{mid:31,top:18,bot:51,j:7,jb:1.8,dips:[[43,2,.3],[75,2,.6],[115,6,.2]]}}],
 null,null,null,
 [{x:817,w:559,p:1,t:'7 beat tablas Dec 1971 250212b - 01 (Left)-01',v:{mid:31,top:-2,bot:65,j:2,min:0,max:63,step:1,soft:1,
   dips:[[87,1.2,.2],[117,1.4,.75],[135,1.4,.2],[168,1.8,.75],[174,1.4,.7],[201,1.5,.25],[215,3,.85],[223,1.4,.6],[270,2,.65],[273,1.6,.9],[291,1.4,.6],[380,1.3,.2],[397,1.4,.3],[404,1.4,.35],[414,1.8,.4],[420,2,.2],[437,1.4,.25],[450,1.4,.15],[485,1.4,.5],[492,1.3,.2],[552,1.4,.35]]}}],
 [{x:817,w:559,t:'7 beat tablas Dec 1971 250212b - 02 (Right)-01',line:31}]
];
const H = {xl:129,lg:85,md:63,sm:41,xs:16};
tracks.forEach((t, i) => {
  let inner = (content[i] || []).map(c => clip(c, H[t.t])).join('');
  if (t.kind === 'marker') inner = [[548,1],[1020,3],[1093,2]].map(([x,n]) => `<div class="flag" style="left:${pc(x)}">${n}</div>`).join('');
  if (t.kind === 'tempo') inner = '<div class="tempo-line"></div>' + [8,148,563,599,617,1264,1266].map(x => `<div class="node" style="left:${pc(x)}"></div>`).join('');
  lh += `<div class="lane t-${t.t}">${inner}</div>`;
});
lanes.insertAdjacentHTML('beforeend', lh);
</script>
</body>
</html>
